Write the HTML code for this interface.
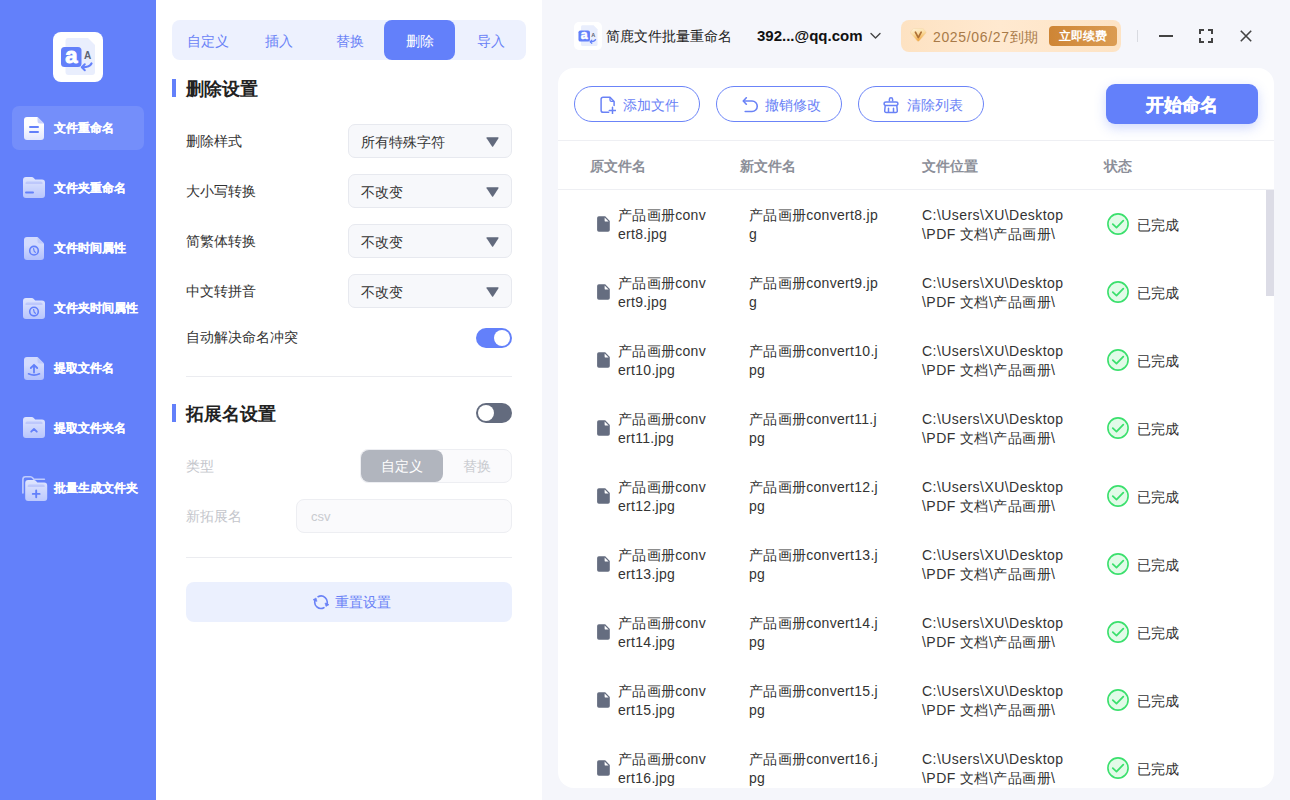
<!DOCTYPE html>
<html><head><meta charset="utf-8">
<style>
*{box-sizing:border-box;margin:0;padding:0}
html,body{width:1290px;height:800px;overflow:hidden;background:#F5F6FB;font-family:"Liberation Sans",sans-serif;color:#333}
.abs{position:absolute}
#side{position:absolute;left:0;top:0;width:156px;height:800px;background:#6380FA}
.logo{position:absolute;left:53px;top:32px;width:50px;height:50px;background:#fff;border-radius:8px}
.nav{position:absolute;left:12px;width:132px;height:44px;border-radius:7px}
.nav.on{background:rgba(255,255,255,0.11)}

.nav span{position:absolute;left:42px;top:14px;font-size:12px;font-weight:bold;color:#fff;line-height:16px;white-space:nowrap;-webkit-text-stroke:0.15px #fff}
#mid{position:absolute;left:156px;top:0;width:386px;height:800px;background:#fff}
.tabs{position:absolute;left:16px;top:20px;width:354px;height:40px;background:#EDF1FE;border-radius:8px}
.tab{position:absolute;top:0;width:71px;height:40px;line-height:42px;text-align:center;font-size:14px;color:#6A82F6}
.tab.on{background:#6380FA;color:#fff;border-radius:8px}
.sec{position:absolute;left:16px;height:18px;border-left:4px solid #6380FA}
.sect{position:absolute;left:30px;font-size:18px;font-weight:bold;color:#222;line-height:20px;white-space:nowrap}
.lab{position:absolute;left:30px;font-size:14px;color:#333;line-height:20px;white-space:nowrap}
.sel{position:absolute;left:192px;width:164px;height:34px;background:#F7F8FB;border:1px solid #E7E9EF;border-radius:7px}
.sel span{position:absolute;left:12px;top:7px;font-size:14px;line-height:20px;color:#333}
.sel svg{position:absolute;left:137px;top:12px}
.tog{position:absolute;left:320px;width:36px;height:20px;border-radius:10px;background:#6380FA}
.tog i{position:absolute;top:2px;width:16px;height:16px;border-radius:50%;background:#fff}
.hr{position:absolute;left:30px;width:326px;height:1px;background:#EBECF0}
#right{position:absolute;left:542px;top:0;width:748px;height:800px;background:#F5F6FB}
.card{position:absolute;left:16px;top:68px;width:716px;height:720px;background:#fff;border-radius:16px;overflow:hidden}
.pill{position:absolute;top:18px;width:126px;height:36px;border:1px solid #6B84F8;border-radius:18px}

.pill span{position:absolute;top:8px;font-size:14px;line-height:20px;color:#6A82F6;white-space:nowrap}
.th{position:absolute;top:88px;font-size:14px;font-weight:bold;color:#8C8F99;line-height:20px}
.row{position:absolute;left:0;width:700px;height:68px}
.c1,.c2,.c3{position:absolute;top:16px;font-size:14px;line-height:19px;color:#333;white-space:nowrap;letter-spacing:0.3px}
.c3{letter-spacing:0.45px}
</style></head><body>
<div id="side">
  <div class="logo"><svg width="50" height="50" viewBox="0 0 50 50"><path d="M15 6 H35 L42 13 V40 Q42 43 39 43 H15.5 Q12.5 43 12.5 40 V9 Q12.5 6 15 6Z" fill="#E9EEFD"/><rect x="8" y="15" width="20.5" height="20" rx="3.5" fill="#6380FA"/><text x="18.3" y="30.6" font-family="Liberation Sans" font-weight="bold" font-size="22" fill="#fff" stroke="#fff" stroke-width="0.9" text-anchor="middle">a</text><text x="34.6" y="26.8" font-family="Liberation Sans" font-weight="bold" font-size="10" fill="#5B6272" text-anchor="middle">A</text><path d="M38.5 31.5 Q36.5 35.3 29.5 35.3" fill="none" stroke="#6380FA" stroke-width="2.2" stroke-linecap="round"/><path d="M31.8 32.3 L28.8 35.3 L31.8 38.3" fill="none" stroke="#6380FA" stroke-width="2" stroke-linecap="round" stroke-linejoin="round"/></svg></div>
  <div class="nav on" style="top:106px"><div class="abs" style="left:12px;top:11px;line-height:0"><svg width="20" height="23" viewBox="0 0 20 23"><defs><linearGradient id="g0" x1="0" y1="0" x2="0" y2="1"><stop offset="0.35" stop-color="#fff" stop-opacity="0.99"/><stop offset="1" stop-color="#E2E7FE" stop-opacity="0.99"/></linearGradient></defs><path d="M3 0 H13.5 L20 6.5 V20 Q20 23 17 23 H3 Q0 23 0 20 V3 Q0 0 3 0Z" fill="url(#g0)"/><path d="M13.5 0 V4 Q13.5 6.5 16 6.5 H20Z" fill="#BCC7FB" opacity="0.8"/><rect x="5" y="9" width="10" height="2" rx="1" fill="#6380FA"/><rect x="5" y="14" width="10" height="2" rx="1" fill="#6380FA"/></svg></div><span>文件重命名</span></div>
  <div class="nav" style="top:166px"><div class="abs" style="left:11px;top:11px;line-height:0"><svg width="22" height="21" viewBox="0 0 22 21"><defs><linearGradient id="g1" x1="0" y1="0" x2="0" y2="1"><stop offset="0" stop-color="#fff" stop-opacity="0.8"/><stop offset="1" stop-color="#fff" stop-opacity="0.55"/></linearGradient></defs><path d="M3 0 H8.5 Q10 0 11 1.2 L12.2 2.5 H19 Q22 2.5 22 5.5 V18 Q22 21 19 21 H3 Q0 21 0 18 V3 Q0 0 3 0Z" fill="url(#g1)"/><path d="M2.5 6 Q2.5 4.5 4 4.5 H18 Q19.5 4.5 19.5 6 V7 H2.5Z" fill="#A9B7FA" opacity="0.55"/><rect x="2" y="14.5" width="9" height="2" rx="1" fill="#6380FA"/></svg></div><span>文件夹重命名</span></div>
  <div class="nav" style="top:226px"><div class="abs" style="left:12px;top:11px;line-height:0"><svg width="20" height="23" viewBox="0 0 20 23"><defs><linearGradient id="g2" x1="0" y1="0" x2="0" y2="1"><stop offset="0.35" stop-color="#fff" stop-opacity="0.72"/><stop offset="1" stop-color="#E2E7FE" stop-opacity="0.62"/></linearGradient></defs><path d="M3 0 H13.5 L20 6.5 V20 Q20 23 17 23 H3 Q0 23 0 20 V3 Q0 0 3 0Z" fill="url(#g2)"/><path d="M13.5 0 V4 Q13.5 6.5 16 6.5 H20Z" fill="#BCC7FB" opacity="0.8"/><circle cx="10" cy="13.7" r="4.3" fill="none" stroke="#6380FA" stroke-width="1.6"/><path d="M9.6 11.6 L10.2 14.3 L11.4 15.4" fill="none" stroke="#6380FA" stroke-width="1.2" stroke-linecap="round"/></svg></div><span>文件时间属性</span></div>
  <div class="nav" style="top:286px"><div class="abs" style="left:11px;top:12px;line-height:0"><svg width="22" height="21" viewBox="0 0 22 21"><defs><linearGradient id="g3" x1="0" y1="0" x2="0" y2="1"><stop offset="0" stop-color="#fff" stop-opacity="0.8"/><stop offset="1" stop-color="#fff" stop-opacity="0.55"/></linearGradient></defs><path d="M3 0 H8.5 Q10 0 11 1.2 L12.2 2.5 H19 Q22 2.5 22 5.5 V18 Q22 21 19 21 H3 Q0 21 0 18 V3 Q0 0 3 0Z" fill="url(#g3)"/><path d="M2.5 6 Q2.5 4.5 4 4.5 H18 Q19.5 4.5 19.5 6 V7 H2.5Z" fill="#A9B7FA" opacity="0.55"/><circle cx="11" cy="13.6" r="4.3" fill="none" stroke="#6380FA" stroke-width="1.6"/><path d="M10.6 11.5 L11.2 14.2 L12.4 15.3" fill="none" stroke="#6380FA" stroke-width="1.2" stroke-linecap="round"/></svg></div><span>文件夹时间属性</span></div>
  <div class="nav" style="top:346px"><div class="abs" style="left:12px;top:11px;line-height:0"><svg width="20" height="23" viewBox="0 0 20 23"><defs><linearGradient id="g4" x1="0" y1="0" x2="0" y2="1"><stop offset="0.35" stop-color="#fff" stop-opacity="0.72"/><stop offset="1" stop-color="#E2E7FE" stop-opacity="0.62"/></linearGradient></defs><path d="M3 0 H13.5 L20 6.5 V20 Q20 23 17 23 H3 Q0 23 0 20 V3 Q0 0 3 0Z" fill="url(#g4)"/><path d="M13.5 0 V4 Q13.5 6.5 16 6.5 H20Z" fill="#BCC7FB" opacity="0.8"/><path d="M10 8 V15.5 M6.8 11 L10 7.8 L13.2 11" fill="none" stroke="#6380FA" stroke-width="1.8" stroke-linecap="round" stroke-linejoin="round"/><path d="M4.5 16.8 Q10 19.4 15.5 16.8" fill="none" stroke="#6380FA" stroke-width="1.6" stroke-linecap="round"/></svg></div><span>提取文件名</span></div>
  <div class="nav" style="top:406px"><div class="abs" style="left:11px;top:11px;line-height:0"><svg width="22" height="21" viewBox="0 0 22 21"><defs><linearGradient id="g5" x1="0" y1="0" x2="0" y2="1"><stop offset="0" stop-color="#fff" stop-opacity="0.8"/><stop offset="1" stop-color="#fff" stop-opacity="0.55"/></linearGradient></defs><path d="M3 0 H8.5 Q10 0 11 1.2 L12.2 2.5 H19 Q22 2.5 22 5.5 V18 Q22 21 19 21 H3 Q0 21 0 18 V3 Q0 0 3 0Z" fill="url(#g5)"/><path d="M2.5 6 Q2.5 4.5 4 4.5 H18 Q19.5 4.5 19.5 6 V7 H2.5Z" fill="#A9B7FA" opacity="0.55"/><path d="M8.2 14.7 L11 12 L13.8 14.7" fill="none" stroke="#6380FA" stroke-width="1.8" stroke-linecap="round" stroke-linejoin="round"/></svg></div><span>提取文件夹名</span></div>
  <div class="nav" style="top:466px"><div class="abs" style="left:10px;top:10px;line-height:0"><svg width="26" height="26" viewBox="0 0 26 26"><defs><linearGradient id="g6" x1="0" y1="0" x2="0" y2="1"><stop offset="0" stop-color="#fff" stop-opacity="0.8"/><stop offset="1" stop-color="#fff" stop-opacity="0.58"/></linearGradient></defs><path d="M0.9 17 V3.4 Q0.9 0.8 3.5 0.8 H8.3 Q9.8 0.8 10.8 2.1 L11.8 3.3 H22.4" fill="none" stroke="#fff" stroke-opacity="0.6" stroke-width="1.6" stroke-linecap="round"/><g transform="translate(3.2,4)"><path d="M3 0 H8.5 Q10 0 11 1.2 L12.2 2.5 H19 Q22 2.5 22 5.5 V18 Q22 21 19 21 H3 Q0 21 0 18 V3 Q0 0 3 0Z" fill="url(#g6)"/><path d="M2.5 6 Q2.5 4.5 4 4.5 H18 Q19.5 4.5 19.5 6 V7 H2.5Z" fill="#A9B7FA" opacity="0.55"/><path d="M11 10.5 V17.3 M7.6 13.9 H14.4" stroke="#6380FA" stroke-width="1.9" stroke-linecap="round"/></g></svg></div><span>批量生成文件夹</span></div>
</div>
<div id="mid">
  <div class="tabs">
    <div class="tab" style="left:0">自定义</div>
    <div class="tab" style="left:71px">插入</div>
    <div class="tab" style="left:142px">替换</div>
    <div class="tab on" style="left:212px">删除</div>
    <div class="tab" style="left:283px">导入</div>
  </div>

  <div class="sec" style="top:79px"></div>
  <div class="sect" style="top:79px">删除设置</div>
  <div class="lab" style="top:131px">删除样式</div>
  <div class="sel" style="top:124px"><span>所有特殊字符</span><svg width="13" height="10" viewBox="0 0 13 10"><path d="M1.1 0.2 H11.9 Q13.1 0.2 12.5 1.2 L7.3 9.3 Q6.6 10.3 5.9 9.3 L0.6 1.2 Q0 0.2 1.1 0.2Z" fill="#626A7D"/></svg></div>
  <div class="lab" style="top:181px">大小写转换</div>
  <div class="sel" style="top:174px"><span>不改变</span><svg width="13" height="10" viewBox="0 0 13 10"><path d="M1.1 0.2 H11.9 Q13.1 0.2 12.5 1.2 L7.3 9.3 Q6.6 10.3 5.9 9.3 L0.6 1.2 Q0 0.2 1.1 0.2Z" fill="#626A7D"/></svg></div>
  <div class="lab" style="top:231px">简繁体转换</div>
  <div class="sel" style="top:224px"><span>不改变</span><svg width="13" height="10" viewBox="0 0 13 10"><path d="M1.1 0.2 H11.9 Q13.1 0.2 12.5 1.2 L7.3 9.3 Q6.6 10.3 5.9 9.3 L0.6 1.2 Q0 0.2 1.1 0.2Z" fill="#626A7D"/></svg></div>
  <div class="lab" style="top:281px">中文转拼音</div>
  <div class="sel" style="top:274px"><span>不改变</span><svg width="13" height="10" viewBox="0 0 13 10"><path d="M1.1 0.2 H11.9 Q13.1 0.2 12.5 1.2 L7.3 9.3 Q6.6 10.3 5.9 9.3 L0.6 1.2 Q0 0.2 1.1 0.2Z" fill="#626A7D"/></svg></div>
  <div class="lab" style="top:327px">自动解决命名冲突</div>
  <div class="tog" style="top:328px"><i style="left:18px"></i></div>
  <div class="hr" style="top:376px"></div>
  <div class="sec" style="top:404px"></div>
  <div class="sect" style="top:404px">拓展名设置</div>
  <div class="tog" style="top:403px;background:#636B7E"><i style="left:2px"></i></div>
  <div class="lab" style="top:456px;color:#C4C6CC">类型</div>
  <div class="abs" style="left:204px;top:449px;width:152px;height:34px;background:#FAFAFC;border:1px solid #EDEEF2;border-radius:8px">
    <div class="abs" style="left:0;top:0;width:82px;height:32px;background:#B1B5BE;border-radius:8px;color:#fff;font-size:14px;line-height:33px;text-align:center">自定义</div>
    <div class="abs" style="left:82px;top:0;width:68px;height:32px;color:#C9CBD0;font-size:14px;line-height:33px;text-align:center">替换</div>
  </div>
  <div class="lab" style="top:506px;color:#C4C6CC">新拓展名</div>
  <div class="abs" style="left:140px;top:499px;width:216px;height:34px;background:#FAFAFC;border:1px solid #EDEEF2;border-radius:8px">
    <span class="abs" style="left:14px;top:7px;font-size:13px;line-height:20px;color:#C9CBD0">csv</span>
  </div>
  <div class="hr" style="top:557px"></div>
  <div class="abs" style="left:30px;top:582px;width:326px;height:40px;background:#EBF0FE;border-radius:8px">
    <div class="abs" style="left:127px;top:12px;line-height:0"><svg width="16" height="16" viewBox="0 0 16 16"><path d="M5.09 2.73 A6.2 6.2 0 0 1 13.75 10.52 M10.91 13.67 A6.2 6.2 0 0 1 2.25 5.88" fill="none" stroke="#6A82F6" stroke-width="1.6" stroke-linecap="round"/><path d="M12.97 12.45 L16.08 10.62 L12.00 8.98Z M3.03 3.95 L-0.08 5.78 L4.00 7.42Z" fill="#6A82F6" stroke="#6A82F6" stroke-width="0.6" stroke-linejoin="round"/></svg></div>
    <span class="abs" style="left:149px;top:10px;font-size:14px;line-height:20px;color:#6A82F6">重置设置</span>
  </div>
</div>
<div id="right">

  <div class="abs" style="left:32px;top:22px;width:28px;height:28px;background:#fff;border-radius:5px;line-height:0"><svg width="28" height="28" viewBox="0 0 50 50"><path d="M15 6 H35 L42 13 V40 Q42 43 39 43 H15.5 Q12.5 43 12.5 40 V9 Q12.5 6 15 6Z" fill="#E9EEFD"/><rect x="8" y="15" width="20.5" height="20" rx="3.5" fill="#6380FA"/><text x="18.3" y="30.6" font-family="Liberation Sans" font-weight="bold" font-size="22" fill="#fff" stroke="#fff" stroke-width="0.9" text-anchor="middle">a</text><text x="34.6" y="26.8" font-family="Liberation Sans" font-weight="bold" font-size="10" fill="#5B6272" text-anchor="middle">A</text><path d="M38.5 31.5 Q36.5 35.3 29.5 35.3" fill="none" stroke="#6380FA" stroke-width="2.2" stroke-linecap="round"/><path d="M31.8 32.3 L28.8 35.3 L31.8 38.3" fill="none" stroke="#6380FA" stroke-width="2" stroke-linecap="round" stroke-linejoin="round"/></svg></div>
  <div class="abs" style="left:64px;top:26px;font-size:14px;line-height:20px;color:#222;white-space:nowrap">简鹿文件批量重命名</div>
  <div class="abs" style="left:215px;top:26px;font-size:15px;font-weight:bold;line-height:20px;color:#111;white-space:nowrap">392...@qq.com</div>
  <svg class="abs" style="left:328px;top:32px" width="11" height="8" viewBox="0 0 11 8"><path d="M1 1.5 L5.5 6 L10 1.5" fill="none" stroke="#444" stroke-width="1.4" stroke-linecap="round" stroke-linejoin="round"/></svg>
  <div class="abs" style="left:359px;top:20px;width:220px;height:32px;border-radius:8px;background:linear-gradient(90deg,#FDE2C2 0%,#FFE9D0 45%,#FDE3C4 100%)">
    <div class="abs" style="left:9px;top:8px;line-height:0"><svg width="17" height="14" viewBox="0 0 17 14"><defs><linearGradient id="dg" x1="0" y1="0" x2="0.3" y2="1"><stop offset="0" stop-color="#FFF6E2"/><stop offset="0.5" stop-color="#FADB9E"/><stop offset="1" stop-color="#F2A944"/></linearGradient></defs><path d="M4.2 0.6 H12.2 Q13.2 0.6 14.1 1.6 L15.8 3.7 Q16.4 4.5 15.7 5.3 L9.1 12.9 Q8.2 13.8 7.3 12.9 L0.8 5.3 Q0.1 4.5 0.7 3.7 L2.3 1.6 Q3.2 0.6 4.2 0.6Z" fill="url(#dg)" stroke="#F3D3A3" stroke-width="0.5"/><path d="M5.4 4.2 L8.3 9.6 L11.2 4.2" fill="none" stroke="#AE7136" stroke-width="1.7" stroke-linecap="round" stroke-linejoin="round"/></svg></div>
    <div class="abs" style="left:32px;top:7px;font-size:14px;line-height:20px;color:#A87A48;white-space:nowrap;letter-spacing:0.65px">2025/06/27到期</div>
    <div class="abs" style="left:148px;top:6px;width:68px;height:20px;border-radius:4px;background:linear-gradient(90deg,#CE8535,#DB9C52);color:#fff;font-size:12px;font-weight:bold;line-height:20px;text-align:center">立即续费</div>
  </div>
  <div class="abs" style="left:595px;top:30px;width:1px;height:12px;background:#D9DBE1"></div>
  <div class="abs" style="left:617px;top:35px;width:14px;height:2px;background:#434343"></div>
  <svg class="abs" style="left:657px;top:29px" width="14" height="14" viewBox="0 0 14 14"><path d="M1 5 V1 H5 M9 1 H13 V5 M13 9 V13 H9 M5 13 H1 V9" fill="none" stroke="#434343" stroke-width="2"/></svg>
  <svg class="abs" style="left:698px;top:30px" width="12" height="12" viewBox="0 0 12 12"><path d="M0.8 0.8 L11.2 11.2 M11.2 0.8 L0.8 11.2" fill="none" stroke="#434343" stroke-width="1.6"/></svg>
  <div class="card">
    <div class="pill" style="left:16px"><div class="abs" style="left:25px;top:9px;line-height:0"><svg width="16" height="18" viewBox="0 0 16 18"><path d="M8.7 16.3 H3.2 Q1.1 16.3 1.1 14.2 V3.3 Q1.1 1.2 3.2 1.2 H10 L14.1 5.4 V9.6" fill="none" stroke="#6A82F6" stroke-width="1.5" stroke-linejoin="round" stroke-linecap="round"/><path d="M10 1.4 V4 Q10 5.4 11.4 5.4 H14" fill="none" stroke="#6A82F6" stroke-width="1.3"/><path d="M12.5 11.2 V17.6 M9.3 14.4 H15.7" stroke="#6A82F6" stroke-width="1.5" stroke-linecap="round"/></svg></div><span style="left:48px">添加文件</span></div>
    <div class="pill" style="left:158px"><div class="abs" style="left:25px;top:10px;line-height:0"><svg width="17" height="16" viewBox="0 0 17 16"><path d="M4.3 0.8 L1.3 4 L4.3 7.2" fill="none" stroke="#6A82F6" stroke-width="1.6" stroke-linecap="round" stroke-linejoin="round"/><path d="M1.6 4 H10 A5.25 5.25 0 0 1 10 14.5 H3.2" fill="none" stroke="#6A82F6" stroke-width="1.6" stroke-linecap="round"/></svg></div><span style="left:48px">撤销修改</span></div>
    <div class="pill" style="left:300px"><div class="abs" style="left:23px;top:9px;line-height:0"><svg width="18" height="18" viewBox="0 0 18 18"><path d="M7.4 5.5 V3.2 Q7.4 1.8 9 1.8 Q10.6 1.8 10.6 3.2 V5.5" fill="none" stroke="#6A82F6" stroke-width="1.5"/><path d="M4 6 H14 Q15.9 6 15.9 7.7 Q15.9 9.4 14 9.4 H4 Q2.1 9.4 2.1 7.7 Q2.1 6 4 6Z" fill="none" stroke="#6A82F6" stroke-width="1.5"/><path d="M3.2 9.6 L2.7 14.8 Q2.6 16.4 4.3 16.4 H13.7 Q15.4 16.4 15.3 14.8 L14.8 9.6" fill="none" stroke="#6A82F6" stroke-width="1.5" stroke-linejoin="round"/><path d="M6.5 12.3 V16 M11.5 12.3 V16" stroke="#6A82F6" stroke-width="1.5" stroke-linecap="round"/></svg></div><span style="left:48px">清除列表</span></div>
    <div class="abs" style="left:548px;top:16px;width:152px;height:40px;border-radius:9px;background:#6380FA;box-shadow:0 4px 12px rgba(99,128,250,0.3);color:#fff;font-size:18px;font-weight:bold;line-height:42px;text-align:center;-webkit-text-stroke:0.4px #fff">开始命名</div>
    <div class="abs" style="left:0;top:72px;width:716px;height:1px;background:#EEEFF3"></div>
    <div class="th" style="left:32px">原文件名</div>
    <div class="th" style="left:182px">新文件名</div>
    <div class="th" style="left:364px">文件位置</div>
    <div class="th" style="left:546px">状态</div>
    <div class="abs" style="left:0;top:121px;width:716px;height:1px;background:#EEEFF3"></div>
    <div class="row" style="top:122px">
      <div class="abs" style="left:39px;top:26px;line-height:0"><svg width="13" height="16" viewBox="0 0 13 16"><path d="M1.9 0.3 H8.2 L12.8 4.9 V14 Q12.8 15.8 11 15.8 H1.9 Q0.1 15.8 0.1 14 V2.1 Q0.1 0.3 1.9 0.3Z" fill="#656D80"/><path d="M7.6 1.6 V4.4 Q7.6 5.6 8.8 5.6 H11.6Z" fill="#fff"/></svg></div>
      <div class="c1" style="left:60px">产品画册conv<br>ert8.jpg</div>
      <div class="c2" style="left:191px">产品画册convert8.jp<br>g</div>
      <div class="c3" style="left:364px">C:\Users\XU\Desktop<br>\PDF 文档\产品画册\</div>
      <div class="abs" style="left:549px;top:23px;line-height:0"><svg width="22" height="22" viewBox="0 0 22 22"><circle cx="11" cy="11" r="10.1" fill="#E2FBE8" stroke="#3BE06D" stroke-width="1.6"/><path d="M5.8 11.2 L9.5 14.6 L16.3 7.6" fill="none" stroke="#3BE06D" stroke-width="1.8" stroke-linecap="round" stroke-linejoin="round"/></svg></div>
      <div class="abs" style="left:579px;top:25px;font-size:14px;line-height:20px;color:#333">已完成</div>
    </div>
    <div class="row" style="top:190px">
      <div class="abs" style="left:39px;top:26px;line-height:0"><svg width="13" height="16" viewBox="0 0 13 16"><path d="M1.9 0.3 H8.2 L12.8 4.9 V14 Q12.8 15.8 11 15.8 H1.9 Q0.1 15.8 0.1 14 V2.1 Q0.1 0.3 1.9 0.3Z" fill="#656D80"/><path d="M7.6 1.6 V4.4 Q7.6 5.6 8.8 5.6 H11.6Z" fill="#fff"/></svg></div>
      <div class="c1" style="left:60px">产品画册conv<br>ert9.jpg</div>
      <div class="c2" style="left:191px">产品画册convert9.jp<br>g</div>
      <div class="c3" style="left:364px">C:\Users\XU\Desktop<br>\PDF 文档\产品画册\</div>
      <div class="abs" style="left:549px;top:23px;line-height:0"><svg width="22" height="22" viewBox="0 0 22 22"><circle cx="11" cy="11" r="10.1" fill="#E2FBE8" stroke="#3BE06D" stroke-width="1.6"/><path d="M5.8 11.2 L9.5 14.6 L16.3 7.6" fill="none" stroke="#3BE06D" stroke-width="1.8" stroke-linecap="round" stroke-linejoin="round"/></svg></div>
      <div class="abs" style="left:579px;top:25px;font-size:14px;line-height:20px;color:#333">已完成</div>
    </div>
    <div class="row" style="top:258px">
      <div class="abs" style="left:39px;top:26px;line-height:0"><svg width="13" height="16" viewBox="0 0 13 16"><path d="M1.9 0.3 H8.2 L12.8 4.9 V14 Q12.8 15.8 11 15.8 H1.9 Q0.1 15.8 0.1 14 V2.1 Q0.1 0.3 1.9 0.3Z" fill="#656D80"/><path d="M7.6 1.6 V4.4 Q7.6 5.6 8.8 5.6 H11.6Z" fill="#fff"/></svg></div>
      <div class="c1" style="left:60px">产品画册conv<br>ert10.jpg</div>
      <div class="c2" style="left:191px">产品画册convert10.j<br>pg</div>
      <div class="c3" style="left:364px">C:\Users\XU\Desktop<br>\PDF 文档\产品画册\</div>
      <div class="abs" style="left:549px;top:23px;line-height:0"><svg width="22" height="22" viewBox="0 0 22 22"><circle cx="11" cy="11" r="10.1" fill="#E2FBE8" stroke="#3BE06D" stroke-width="1.6"/><path d="M5.8 11.2 L9.5 14.6 L16.3 7.6" fill="none" stroke="#3BE06D" stroke-width="1.8" stroke-linecap="round" stroke-linejoin="round"/></svg></div>
      <div class="abs" style="left:579px;top:25px;font-size:14px;line-height:20px;color:#333">已完成</div>
    </div>
    <div class="row" style="top:326px">
      <div class="abs" style="left:39px;top:26px;line-height:0"><svg width="13" height="16" viewBox="0 0 13 16"><path d="M1.9 0.3 H8.2 L12.8 4.9 V14 Q12.8 15.8 11 15.8 H1.9 Q0.1 15.8 0.1 14 V2.1 Q0.1 0.3 1.9 0.3Z" fill="#656D80"/><path d="M7.6 1.6 V4.4 Q7.6 5.6 8.8 5.6 H11.6Z" fill="#fff"/></svg></div>
      <div class="c1" style="left:60px">产品画册conv<br>ert11.jpg</div>
      <div class="c2" style="left:191px">产品画册convert11.j<br>pg</div>
      <div class="c3" style="left:364px">C:\Users\XU\Desktop<br>\PDF 文档\产品画册\</div>
      <div class="abs" style="left:549px;top:23px;line-height:0"><svg width="22" height="22" viewBox="0 0 22 22"><circle cx="11" cy="11" r="10.1" fill="#E2FBE8" stroke="#3BE06D" stroke-width="1.6"/><path d="M5.8 11.2 L9.5 14.6 L16.3 7.6" fill="none" stroke="#3BE06D" stroke-width="1.8" stroke-linecap="round" stroke-linejoin="round"/></svg></div>
      <div class="abs" style="left:579px;top:25px;font-size:14px;line-height:20px;color:#333">已完成</div>
    </div>
    <div class="row" style="top:394px">
      <div class="abs" style="left:39px;top:26px;line-height:0"><svg width="13" height="16" viewBox="0 0 13 16"><path d="M1.9 0.3 H8.2 L12.8 4.9 V14 Q12.8 15.8 11 15.8 H1.9 Q0.1 15.8 0.1 14 V2.1 Q0.1 0.3 1.9 0.3Z" fill="#656D80"/><path d="M7.6 1.6 V4.4 Q7.6 5.6 8.8 5.6 H11.6Z" fill="#fff"/></svg></div>
      <div class="c1" style="left:60px">产品画册conv<br>ert12.jpg</div>
      <div class="c2" style="left:191px">产品画册convert12.j<br>pg</div>
      <div class="c3" style="left:364px">C:\Users\XU\Desktop<br>\PDF 文档\产品画册\</div>
      <div class="abs" style="left:549px;top:23px;line-height:0"><svg width="22" height="22" viewBox="0 0 22 22"><circle cx="11" cy="11" r="10.1" fill="#E2FBE8" stroke="#3BE06D" stroke-width="1.6"/><path d="M5.8 11.2 L9.5 14.6 L16.3 7.6" fill="none" stroke="#3BE06D" stroke-width="1.8" stroke-linecap="round" stroke-linejoin="round"/></svg></div>
      <div class="abs" style="left:579px;top:25px;font-size:14px;line-height:20px;color:#333">已完成</div>
    </div>
    <div class="row" style="top:462px">
      <div class="abs" style="left:39px;top:26px;line-height:0"><svg width="13" height="16" viewBox="0 0 13 16"><path d="M1.9 0.3 H8.2 L12.8 4.9 V14 Q12.8 15.8 11 15.8 H1.9 Q0.1 15.8 0.1 14 V2.1 Q0.1 0.3 1.9 0.3Z" fill="#656D80"/><path d="M7.6 1.6 V4.4 Q7.6 5.6 8.8 5.6 H11.6Z" fill="#fff"/></svg></div>
      <div class="c1" style="left:60px">产品画册conv<br>ert13.jpg</div>
      <div class="c2" style="left:191px">产品画册convert13.j<br>pg</div>
      <div class="c3" style="left:364px">C:\Users\XU\Desktop<br>\PDF 文档\产品画册\</div>
      <div class="abs" style="left:549px;top:23px;line-height:0"><svg width="22" height="22" viewBox="0 0 22 22"><circle cx="11" cy="11" r="10.1" fill="#E2FBE8" stroke="#3BE06D" stroke-width="1.6"/><path d="M5.8 11.2 L9.5 14.6 L16.3 7.6" fill="none" stroke="#3BE06D" stroke-width="1.8" stroke-linecap="round" stroke-linejoin="round"/></svg></div>
      <div class="abs" style="left:579px;top:25px;font-size:14px;line-height:20px;color:#333">已完成</div>
    </div>
    <div class="row" style="top:530px">
      <div class="abs" style="left:39px;top:26px;line-height:0"><svg width="13" height="16" viewBox="0 0 13 16"><path d="M1.9 0.3 H8.2 L12.8 4.9 V14 Q12.8 15.8 11 15.8 H1.9 Q0.1 15.8 0.1 14 V2.1 Q0.1 0.3 1.9 0.3Z" fill="#656D80"/><path d="M7.6 1.6 V4.4 Q7.6 5.6 8.8 5.6 H11.6Z" fill="#fff"/></svg></div>
      <div class="c1" style="left:60px">产品画册conv<br>ert14.jpg</div>
      <div class="c2" style="left:191px">产品画册convert14.j<br>pg</div>
      <div class="c3" style="left:364px">C:\Users\XU\Desktop<br>\PDF 文档\产品画册\</div>
      <div class="abs" style="left:549px;top:23px;line-height:0"><svg width="22" height="22" viewBox="0 0 22 22"><circle cx="11" cy="11" r="10.1" fill="#E2FBE8" stroke="#3BE06D" stroke-width="1.6"/><path d="M5.8 11.2 L9.5 14.6 L16.3 7.6" fill="none" stroke="#3BE06D" stroke-width="1.8" stroke-linecap="round" stroke-linejoin="round"/></svg></div>
      <div class="abs" style="left:579px;top:25px;font-size:14px;line-height:20px;color:#333">已完成</div>
    </div>
    <div class="row" style="top:598px">
      <div class="abs" style="left:39px;top:26px;line-height:0"><svg width="13" height="16" viewBox="0 0 13 16"><path d="M1.9 0.3 H8.2 L12.8 4.9 V14 Q12.8 15.8 11 15.8 H1.9 Q0.1 15.8 0.1 14 V2.1 Q0.1 0.3 1.9 0.3Z" fill="#656D80"/><path d="M7.6 1.6 V4.4 Q7.6 5.6 8.8 5.6 H11.6Z" fill="#fff"/></svg></div>
      <div class="c1" style="left:60px">产品画册conv<br>ert15.jpg</div>
      <div class="c2" style="left:191px">产品画册convert15.j<br>pg</div>
      <div class="c3" style="left:364px">C:\Users\XU\Desktop<br>\PDF 文档\产品画册\</div>
      <div class="abs" style="left:549px;top:23px;line-height:0"><svg width="22" height="22" viewBox="0 0 22 22"><circle cx="11" cy="11" r="10.1" fill="#E2FBE8" stroke="#3BE06D" stroke-width="1.6"/><path d="M5.8 11.2 L9.5 14.6 L16.3 7.6" fill="none" stroke="#3BE06D" stroke-width="1.8" stroke-linecap="round" stroke-linejoin="round"/></svg></div>
      <div class="abs" style="left:579px;top:25px;font-size:14px;line-height:20px;color:#333">已完成</div>
    </div>
    <div class="row" style="top:666px">
      <div class="abs" style="left:39px;top:26px;line-height:0"><svg width="13" height="16" viewBox="0 0 13 16"><path d="M1.9 0.3 H8.2 L12.8 4.9 V14 Q12.8 15.8 11 15.8 H1.9 Q0.1 15.8 0.1 14 V2.1 Q0.1 0.3 1.9 0.3Z" fill="#656D80"/><path d="M7.6 1.6 V4.4 Q7.6 5.6 8.8 5.6 H11.6Z" fill="#fff"/></svg></div>
      <div class="c1" style="left:60px">产品画册conv<br>ert16.jpg</div>
      <div class="c2" style="left:191px">产品画册convert16.j<br>pg</div>
      <div class="c3" style="left:364px">C:\Users\XU\Desktop<br>\PDF 文档\产品画册\</div>
      <div class="abs" style="left:549px;top:23px;line-height:0"><svg width="22" height="22" viewBox="0 0 22 22"><circle cx="11" cy="11" r="10.1" fill="#E2FBE8" stroke="#3BE06D" stroke-width="1.6"/><path d="M5.8 11.2 L9.5 14.6 L16.3 7.6" fill="none" stroke="#3BE06D" stroke-width="1.8" stroke-linecap="round" stroke-linejoin="round"/></svg></div>
      <div class="abs" style="left:579px;top:25px;font-size:14px;line-height:20px;color:#333">已完成</div>
    </div>
    <div class="abs" style="left:708px;top:122px;width:8px;height:106px;background:#DCDCE6"></div>
  </div>
</div>
</body></html>
